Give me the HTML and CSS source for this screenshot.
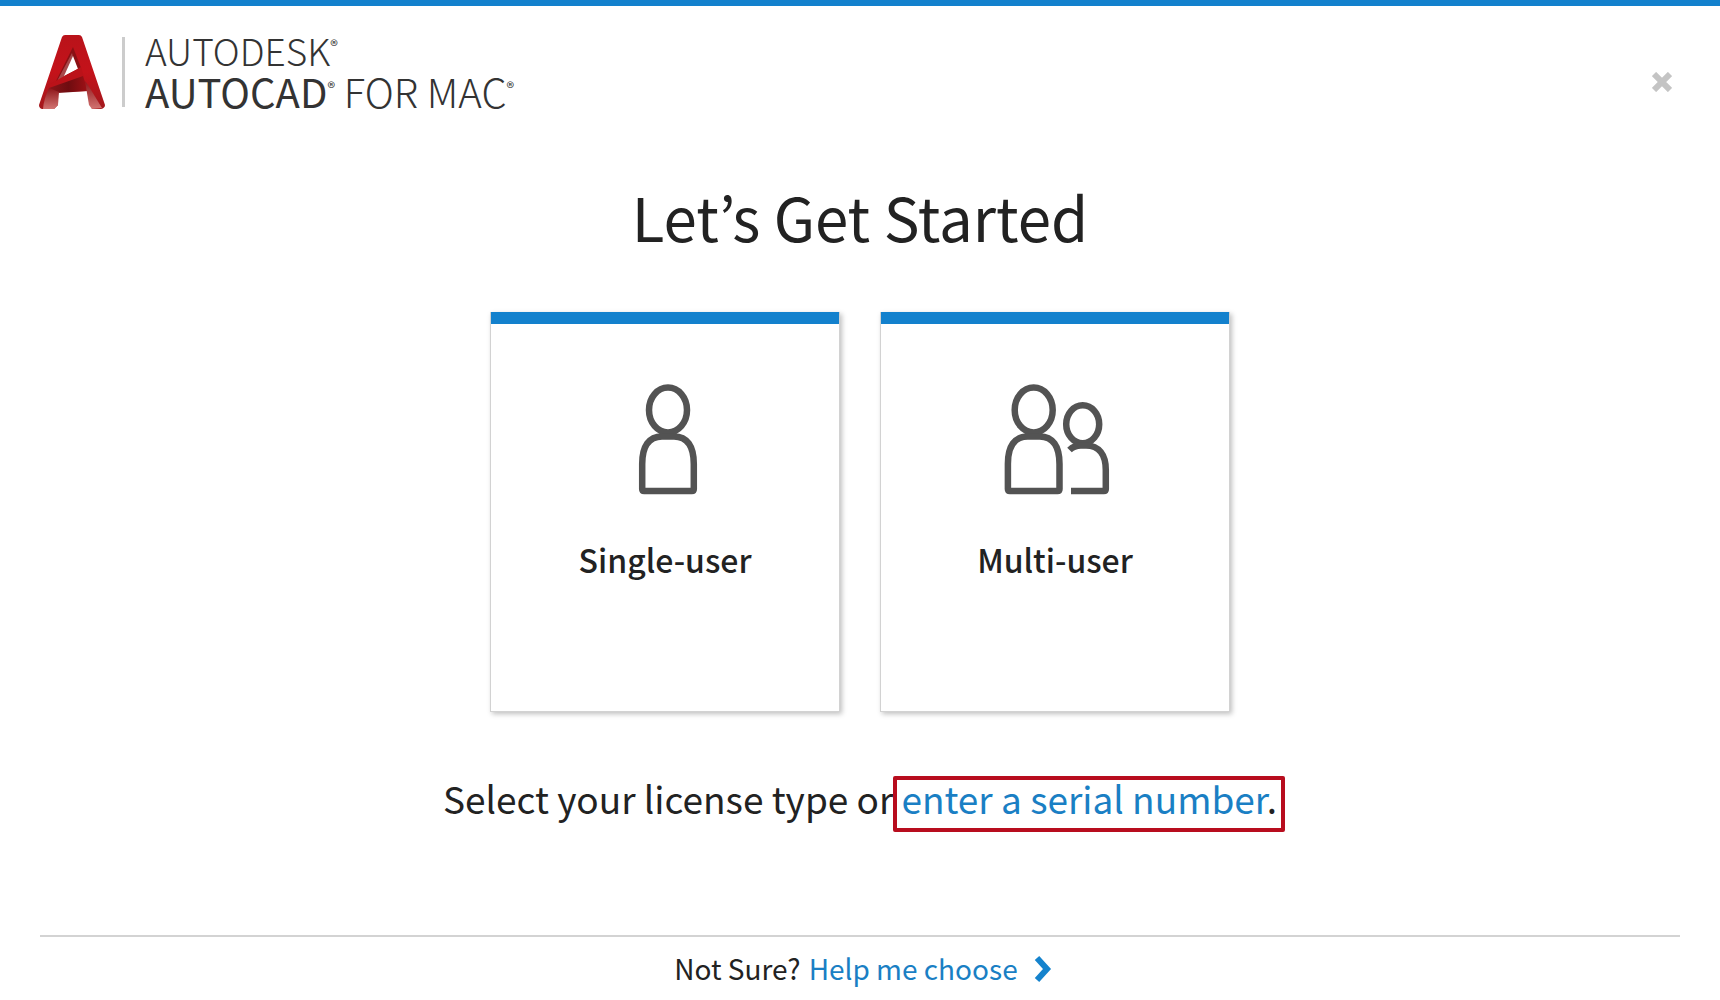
FILE: index.html
```html
<!DOCTYPE html>
<html lang="en">
<head>
<meta charset="utf-8">
<title>Let’s Get Started</title>
<meta name="viewport" content="width=device-width, initial-scale=1">
<link rel="stylesheet" href="styles.css">
</head>
<body>
<header class="header">
  <div class="brand">
    <svg class="brand-mark" viewBox="0 0 66 74" aria-hidden="true">
      <defs>
        <linearGradient id="face" x1="0" y1="0" x2="0" y2="1">
          <stop offset="0" stop-color="#b9131a"/>
          <stop offset="0.5" stop-color="#c4121a"/>
          <stop offset="1" stop-color="#a3181d"/>
        </linearGradient>
        <linearGradient id="foot" x1="0" y1="0" x2="0" y2="1">
          <stop offset="0" stop-color="#8e1519"/>
          <stop offset="1" stop-color="#d27472"/>
        </linearGradient>
        <linearGradient id="bar" x1="0" y1="0" x2="1" y2="0">
          <stop offset="0" stop-color="#8a1519"/>
          <stop offset="0.5" stop-color="#6f0c10"/>
          <stop offset="1" stop-color="#a01116"/>
        </linearGradient>
      </defs>
      <path fill="url(#face)" d="M26 0H40Q42 0 43 2L66 70Q66 73 62 74H53L48 56L19 57V70L15 74H3Q0 73 0 70L23 2Q24 0 26 0Z"/>
      <path fill="#8a1014" d="M34 12L42 33L15 50Z"/>
      <path fill="#a8484a" d="M33 18L34 22L26 42L17 48Z"/>
      <path fill="#fff" d="M34 21L25 41L39 34Z"/>
      <path fill="#bb1219" d="M9 50L42 32L45 42L12 54Z"/>
      <path fill="url(#bar)" d="M10 53L44 41L49 56L19 58Z"/>
      <path fill="url(#foot)" d="M10 53L20 57L19 70L15 74H4Q5 63 10 53Z"/>
      <path fill="url(#foot)" d="M46 46L49 50L63 73L53 74L50 70Z"/>
    </svg>
    <span class="brand-rule"></span>
    <div class="brand-name">
      <span class="brand-company">AUTODESK<sup>®</sup></span>
      <span><strong>AUTOCAD</strong><sup>®</sup> FOR MAC<sup>®</sup></span>
    </div>
  </div>
  <button class="close" type="button" aria-label="Close">
    <svg viewBox="0 0 20 20" width="20" height="20" aria-hidden="true"><path d="M2 2L18 18M18 2L2 18" stroke="#c4c4c4" stroke-width="6"/></svg>
  </button>
</header>

<main class="main">
  <h1 class="title">Let’s Get Started</h1>
  <div class="cards">
    <button class="card" type="button">
      <svg class="card-icon" viewBox="0 0 120 112" aria-hidden="true">
        <ellipse cx="63" cy="26" rx="19" ry="22.500"/>
        <path d="M37.200 105V80C37.200 62 44 52.500 57 52.500H69C82 52.500 88.800 62 88.800 80V105Q88.800 107 86.800 107H39.200Q37.200 107 37.200 105Z"/>
      </svg>
      <span class="card-label">Single-user</span>
    </button>
    <button class="card" type="button">
      <svg class="card-icon" viewBox="0 0 120 112" aria-hidden="true">
        <ellipse cx="38.700" cy="26" rx="19" ry="22.500"/>
        <path d="M12.900 105V80C12.900 62 19.700 52.500 32.700 52.500H44.700C57.700 52.500 64.500 62 64.500 80V105Q64.500 107 62.500 107H14.900Q12.900 107 12.900 105Z"/>
        <ellipse cx="87.700" cy="40.300" rx="16.500" ry="19"/>
        <path d="M74.500 66C78 62.500 82 61.500 86 61.500H91C104 61.500 110.800 71 110.800 86V105Q110.800 107 108.800 107H76"/>
      </svg>
      <span class="card-label">Multi-user</span>
    </button>
  </div>
  <p class="prompt">Select your license type or<span class="serial"><a class="link" href="#serial">enter a serial number</a>.</span></p>
</main>

<footer class="footer">
  <span>Not Sure?</span>
  <a class="link help" href="#help">Help me choose
    <svg viewBox="0 0 18 30" width="18" height="30" aria-hidden="true"><path d="M3 5L13 16L3 27" fill="none" stroke="#1583cd" stroke-width="6"/></svg>
  </a>
</footer>
</body>
</html>
```
FILE: styles.css
```css
* {
  box-sizing: border-box;
}

body {
  margin: 0;
  min-height: 100vh;
  display: flex;
  flex-direction: column;
  border-top: 6px solid #1381cd;
  background: #fff;
  color: #222;
  font-family: "Noto Sans CJK KR", "Noto Sans", sans-serif;
}

button {
  padding: 0;
  border: 0;
  background: none;
  color: inherit;
  font: inherit;
  cursor: pointer;
}

.link {
  color: #1a7fc4;
  text-decoration: none;
}

.header {
  display: flex;
  justify-content: space-between;
  align-items: flex-start;
  padding: 24px 48px 0 39px;
}

.brand {
  display: flex;
  align-items: center;
}

.brand-mark {
  width: 66px;
  height: 74px;
}

.brand-rule {
  width: 3px;
  height: 70px;
  margin: 0 20px 0 17px;
  background: #ccc;
}

.brand-name {
  display: flex;
  flex-direction: column;
  padding-bottom: 2px;
  color: #333;
  font-size: 40px;
  font-weight: 300;
  line-height: 41px;
  white-space: nowrap;
}

.brand-company {
  font-size: 37px;
}

.brand-name sup {
  font-size: 16px;
  font-weight: 400;
  line-height: 0;
  vertical-align: 14px;
}

.close {
  display: flex;
  margin-top: 42px;
}

.main {
  flex: 1;
  display: flex;
  flex-direction: column;
  align-items: center;
}

.title {
  margin: 62px 0 0;
  font-size: 60px;
  font-weight: 400;
  line-height: 80px;
}

.cards {
  display: flex;
  gap: 40px;
  margin-top: 56px;
}

.card {
  width: 350px;
  height: 400px;
  display: flex;
  flex-direction: column;
  align-items: center;
  border: 1px solid #d2d2d2;
  border-top: 0;
  background: linear-gradient(#1381cd 12px, #fff 12px) padding-box;
  box-shadow: 2px 2px 5px rgba(0, 0, 0, 0.25);
}

.card-icon {
  width: 120px;
  height: 112px;
  margin-top: 72px;
  fill: none;
  stroke: #535353;
  stroke-width: 6.5;
  stroke-linejoin: round;
}

.card-label {
  margin-top: 42px;
  font-size: 32px;
  font-weight: 500;
  line-height: 42px;
}

.prompt {
  display: flex;
  align-items: baseline;
  margin: 64px 0 0;
  font-size: 37px;
  line-height: 36px;
}

.serial {
  margin: 0 -8px 0 0;
  padding: 0 4px 12px;
  border: 4px solid #b80d1e;
  border-radius: 2px;
}

.footer {
  display: flex;
  justify-content: center;
  gap: 8px;
  margin: 0 40px;
  padding: 10px 0 11px 6px;
  border-top: 2px solid #d3d3d3;
  font-size: 28px;
  line-height: 42px;
}

.help {
  display: flex;
  align-items: center;
  gap: 16px;
}
```
